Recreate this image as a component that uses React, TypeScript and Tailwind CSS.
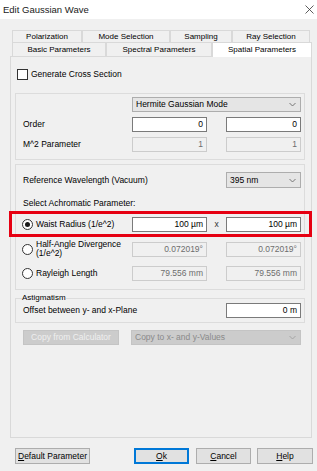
import React from "react";

function Chevron({ color = "#6a6a6a" }: { color?: string }) {
  return (
    <svg width="7" height="5" viewBox="0 0 7 5" className="shrink-0">
      <polyline points="0.5,1 3.5,4 6.5,1" fill="none" stroke={color} strokeWidth="0.9" />
    </svg>
  );
}

function Field({ value, disabled }: { value: string; disabled?: boolean }) {
  return (
    <div
      className={
        disabled
          ? "w-[75px] h-[15px] border border-[#cccccc] bg-[#f0f0f0] text-[#6d6d6d] flex items-center justify-end pr-[3px] shrink-0"
          : "w-[75px] h-[15px] border border-[#7a7a7a] bg-white text-black flex items-center justify-end pr-[3px] shrink-0"
      }
    >
      {value}
    </div>
  );
}

function Radio({ checked }: { checked?: boolean }) {
  return (
    <div className="w-[11px] h-[11px] rounded-full border border-[#333333] bg-white flex items-center justify-center shrink-0">
      {checked ? <div className="w-[5px] h-[5px] rounded-full bg-[#1a1a1a]" /> : null}
    </div>
  );
}

function Tab({ label, w, selected }: { label: string; w: string; selected?: boolean }) {
  return (
    <div
      className={
        selected
          ? `${w} h-[15px] -mb-[1px] relative z-10 bg-white border-t border-l border-r border-[#d9d9d9] flex items-center justify-center text-[8px] text-black`
          : `${w} h-full bg-[#f0f0f0] border-t border-l border-r border-[#d9d9d9] flex items-center justify-center text-[8px] text-black`
      }
    >
      {label}
    </div>
  );
}

export default function App() {
  return (
    <div className="relative w-[317px] h-[471px] bg-[#f0f0f0] overflow-hidden font-['Liberation_Sans',Arial,sans-serif] text-[8.5px] text-black leading-none">
      {/* title bar */}
      <div className="h-[19px] bg-white flex items-center justify-between pl-[3px] pr-[2px]">
        <span className="text-[9.5px] text-[#1a1a1a]">Edit Gaussian Wave</span>
        <svg width="9" height="9" viewBox="0 0 9 9" className="mr-[1px]">
          <path d="M0.5 0.5 L8.5 8.5 M8.5 0.5 L0.5 8.5" stroke="#333" strokeWidth="0.8" />
        </svg>
      </div>

      {/* tabs */}
      <div className="pt-[11px] pl-[12px]">
        <div className="flex h-[12px]">
          <Tab label="Polarization" w="w-[70px]" />
          <Tab label="Mode Selection" w="w-[88px]" />
          <Tab label="Sampling" w="w-[62px]" />
          <Tab label="Ray Selection" w="w-[78px]" />
        </div>
        <div className="flex h-[14px] items-start">
          <Tab label="Basic Parameters" w="w-[94px]" />
          <Tab label="Spectral Parameters" w="w-[106px]" />
          <Tab label="Spatial Parameters" w="w-[100px]" selected />
        </div>
      </div>

      {/* panel */}
      <div className="ml-[10px] w-[302px] h-[382px] border border-[#d9d9d9] bg-[#f0f0f0] pl-[4px]">
        {/* checkbox */}
        <div className="mt-[12px] ml-[2px] flex items-center gap-[3px] h-[11px]">
          <div className="w-[11px] h-[11px] border border-[#333333] bg-white" />
          <span>Generate Cross Section</span>
        </div>

        {/* group 1 */}
        <div className="mt-[13px] w-[290px] border border-[#dcdcdc] pl-[7px] pt-[3px] pb-[7px]">
          <div className="flex">
            <div className="w-[109px]" />
            <div className="w-[169px] h-[15px] border border-[#adadad] bg-[#e5e5e5] flex items-center justify-between pl-[3px] pr-[4px]">
              <span>Hermite Gaussian Mode</span>
              <Chevron />
            </div>
          </div>
          <div className="flex items-center mt-[5px]">
            <div className="w-[109px]">Order</div>
            <Field value="0" />
            <div className="w-[19px]" />
            <Field value="0" />
          </div>
          <div className="flex items-center mt-[5px]">
            <div className="w-[109px]">M^2 Parameter</div>
            <Field value="1" disabled />
            <div className="w-[19px]" />
            <Field value="1" disabled />
          </div>
        </div>

        {/* group 2 */}
        <div className="mt-[4px] w-[290px] border border-[#dcdcdc] pl-[7px] pt-[7px] pb-[8px]">
          <div className="flex items-center">
            <div className="w-[203px]">Reference Wavelength (Vacuum)</div>
            <div className="w-[75px] h-[16px] border border-[#adadad] bg-[#e5e5e5] flex items-center justify-between pl-[3px] pr-[4px]">
              <span>395 nm</span>
              <Chevron />
            </div>
          </div>
          <div className="mt-[8px] h-[14px] flex items-center">Select Achromatic Parameter:</div>
          <div className="flex items-center mt-[7px] -ml-[1px]">
            <div className="w-[110px] flex items-center gap-[3px]">
              <Radio checked />
              <span>Waist Radius (1/e^2)</span>
            </div>
            <Field value="100 µm" />
            <div className="w-[19px] text-center text-[#333]">x</div>
            <Field value="100 µm" />
          </div>
          <div className="flex items-center mt-[8px] -ml-[1px]">
            <div className="w-[110px] flex items-center gap-[3px]">
              <Radio />
              <span className="leading-[9px]">
                Half-Angle Divergence
                <br />
                (1/e^2)
              </span>
            </div>
            <Field value="0.072019°" disabled />
            <div className="w-[19px]" />
            <Field value="0.072019°" disabled />
          </div>
          <div className="flex items-center mt-[8px] -ml-[1px]">
            <div className="w-[110px] flex items-center gap-[3px]">
              <Radio />
              <span>Rayleigh Length</span>
            </div>
            <Field value="79.556 mm" disabled />
            <div className="w-[19px]" />
            <Field value="79.556 mm" disabled />
          </div>
        </div>

        {/* astigmatism */}
        <fieldset className="mt-[4px] w-[290px] border border-[#dcdcdc] pl-[7px] pb-[4px]">
          <legend className="px-[0px] ml-[-1px] text-[8px]">Astigmatism</legend>
          <div className="flex items-center mt-[1px]">
            <div className="w-[203px]">Offset between y- and x-Plane</div>
            <Field value="0 m" />
          </div>
        </fieldset>

        {/* copy row */}
        <div className="mt-[7px] flex items-center">
          <div className="ml-[8px] w-[96px] h-[15px] bg-[#cccccc] border border-[#c4c4c4] flex items-center justify-center text-[#efefef]">
            Copy from Calculator
          </div>
          <div className="ml-[12px] w-[170px] h-[15px] bg-[#cccccc] border border-[#c4c4c4] flex items-center justify-between pl-[3px] pr-[4px] text-[#8a8a8a]">
            <span>Copy to x- and y-Values</span>
            <Chevron color="#a0a0a0" />
          </div>
        </div>
      </div>

      {/* bottom buttons */}
      <div className="mt-[10px] flex items-center h-[16px]">
        <div className="ml-[15px] w-[75px] h-[16px] bg-[#e1e1e1] border border-[#adadad] flex items-center justify-center">
          <span>
            <span className="underline">D</span>efault Parameter
          </span>
        </div>
        <div className="ml-[44px] w-[55px] h-[16px] bg-[#e1e1e1] border-2 border-[#0078d7] flex items-center justify-center">
          <span>
            <span className="underline">O</span>k
          </span>
        </div>
        <div className="ml-[7px] w-[55px] h-[16px] bg-[#e1e1e1] border border-[#adadad] flex items-center justify-center">
          <span>
            <span className="underline">C</span>ancel
          </span>
        </div>
        <div className="ml-[6px] w-[56px] h-[16px] bg-[#e1e1e1] border border-[#adadad] flex items-center justify-center">
          <span>
            <span className="underline">H</span>elp
          </span>
        </div>
      </div>

      {/* red highlight */}
      <div className="absolute left-[9px] top-[211px] w-[303px] h-[26px] border-[3px] border-[#e60012] pointer-events-none" />
    </div>
  );
}
